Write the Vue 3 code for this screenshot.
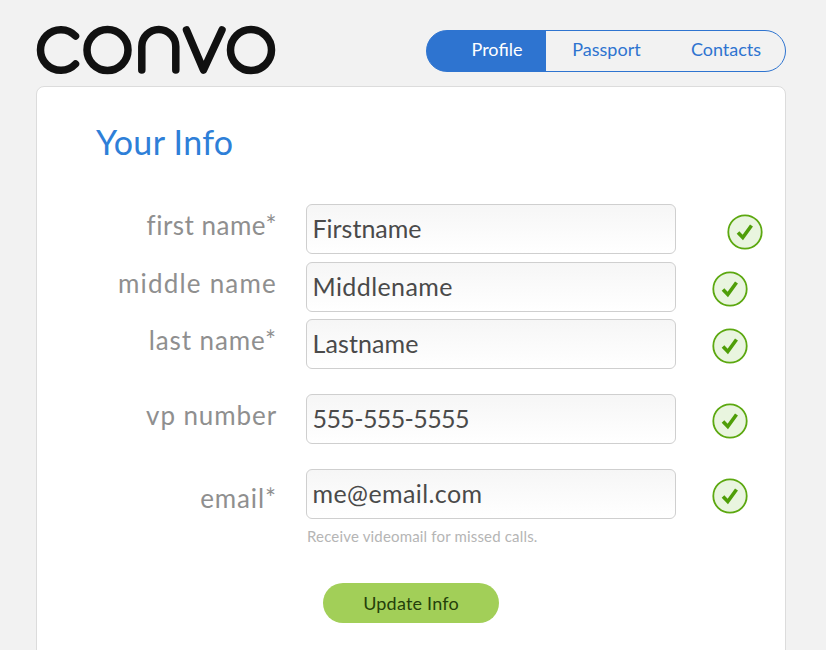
<template>
  <div class="page">
    <header class="top">
      <svg class="logo" width="240" height="50" viewBox="0 0 240 50" fill="none" stroke="#111" stroke-width="7.500" stroke-linecap="round" stroke-linejoin="round">
        <path d="M39.500 11 A20.300 20.300 0 1 0 39.500 39" />
        <circle cx="71.500" cy="25" r="20.500" />
        <path d="M105.800 45 V21.500 A17 17 0 0 1 139.800 21.500 V45" />
        <path d="M150.500 5 L167.500 45 L186 5" />
        <circle cx="215" cy="25" r="20.500" />
      </svg>
      <nav class="tabs">
        <a class="tab active">Profile</a>
        <a class="tab">Passport</a>
        <a class="tab">Contacts</a>
      </nav>
    </header>

    <main class="card">
      <h1 class="title">Your Info</h1>
      <form class="info-form" @submit.prevent>
        <div v-for="f in fields" :key="f.label" class="row" :class="f.cls">
          <label class="field-label">{{ f.label }}</label>
          <div class="field">
            <input class="text-input" type="text" :value="f.value" />
            <div v-if="f.hint" class="hint">{{ f.hint }}</div>
          </div>
          <svg class="check" width="36" height="36" viewBox="0 0 36 36">
            <circle cx="18" cy="18" r="16.700" fill="#e9f5df" stroke="#5ca810" stroke-width="1.800" />
            <path d="M11 18.500 L15.800 23.500 L24.500 11.500" fill="none" stroke="#4f9e08" stroke-width="3.600" />
          </svg>
        </div>
        <button class="submit" type="submit">Update Info</button>
      </form>
    </main>
  </div>
</template>

<script setup>
const fields = [
  { label: 'first name*', value: 'Firstname', cls: 'first' },
  { label: 'middle name', value: 'Middlename', cls: 'middle' },
  { label: 'last name*', value: 'Lastname', cls: 'last' },
  { label: 'vp number', value: '555-555-5555', cls: 'vp' },
  { label: 'email*', value: 'me@email.com', cls: 'email', hint: 'Receive videomail for missed calls.' }
]
</script>

<style>
html, body {
  margin: 0;
  background: #f2f2f2;
  overflow: hidden;
}
</style>

<style scoped>
.page {
  height: 650px;
  overflow: hidden;
  padding: 0 40px 0 36px;
  font-family: Lato, "Noto Sans", sans-serif;
}

.top {
  display: flex;
  justify-content: space-between;
  align-items: flex-start;
  height: 86px;
}

.logo {
  margin-top: 25px;
}

.tabs {
  display: flex;
  width: 360px;
  height: 42px;
  margin-top: 30px;
  box-sizing: border-box;
  border: 1px solid #2e74d0;
  border-radius: 21px;
  background: linear-gradient(90deg, #2e74d0 119px, transparent 119px);
  overflow: hidden;
  color: #2e74d0;
  font-size: 18px;
}

.tab {
  line-height: 37px;
  text-align: center;
}

.tab:nth-child(1) {
  width: 119px;
  padding-left: 21px;
  box-sizing: border-box;
  color: #fff;
}

.tab:nth-child(2) {
  width: 121px;
  box-sizing: border-box;
}

.tab:nth-child(3) {
  width: 118px;
  box-sizing: border-box;
}

.card {
  width: 750px;
  height: 600px;
  box-sizing: border-box;
  padding: 0 0 0 59px;
  background: #fff;
  border: 1px solid #dcdcdc;
  border-radius: 8px;
}

.title {
  margin: 35px 0 0;
  color: #2e7fd8;
  font-size: 34px;
  font-weight: 400;
  line-height: 40px;
  letter-spacing: 0.3px;
}

.info-form {
  margin-top: 42px;
  margin-left: -59px;
}

.row {
  display: flex;
  align-items: flex-start;
  margin-bottom: 8px;
}

.row.middle {
  margin-bottom: 7px;
}

.row.last,
.row.vp {
  margin-bottom: 25px;
}

.field-label {
  width: 240px;
  flex: none;
  margin-top: 3px;
  color: #8f8f8f;
  font-size: 26px;
  line-height: 36px;
  text-align: right;
  letter-spacing: 0.9px;
}

.first .field-label {
  letter-spacing: 0.5px;
}

.middle .field-label {
  letter-spacing: 1.2px;
}

.email .field-label {
  margin-top: 11px;
}

.field {
  width: 370px;
  margin-left: 29px;
  flex: none;
}

.text-input {
  display: block;
  width: 100%;
  height: 50px;
  box-sizing: border-box;
  padding: 0 5.500px 3px;
  border: 1px solid #cfcfcf;
  border-radius: 6px;
  background: linear-gradient(#f6f6f6, #ffffff);
  color: #4a4a4a;
  font-family: inherit;
  font-size: 25px;
  letter-spacing: 0.4px;
  outline: none;
}

.first .text-input {
  letter-spacing: 0;
}

.last .text-input {
  letter-spacing: 0.1px;
}

.vp .text-input {
  letter-spacing: -0.6px;
}

.hint {
  margin-top: 8px;
  padding-left: 1px;
  color: #b5b5b5;
  font-size: 15px;
  line-height: 18px;
  letter-spacing: 0.17px;
}

.check {
  flex: none;
  margin-top: 9px;
  margin-left: 36px;
}

.first .check {
  margin-top: 10px;
  margin-left: 51px;
}

.submit {
  display: block;
  width: 176px;
  height: 40px;
  margin: 38px 0 0 286px;
  border: none;
  border-radius: 20px;
  background: #a2cf58;
  color: #24400a;
  font-family: inherit;
  font-size: 18px;
  letter-spacing: 0.2px;
}
</style>
